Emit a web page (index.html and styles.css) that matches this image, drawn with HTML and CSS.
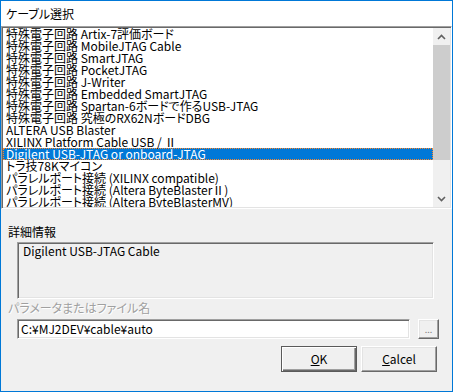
FILE: index.html
```html
<!DOCTYPE html>
<html lang="ja">
<head>
  <meta charset="UTF-8" />
  <title>ケーブル選択</title>
  <link rel="stylesheet" href="styles.css">
</head>
<body>
  <div class="window">
    <div class="titlebar">ケーブル選択</div>

    <div class="listbox">
      <ul class="items">
        <li>特殊電子回路 Artix-7評価ボード</li>
        <li>特殊電子回路 MobileJTAG Cable</li>
        <li>特殊電子回路 SmartJTAG</li>
        <li>特殊電子回路 PocketJTAG</li>
        <li>特殊電子回路 J-Writer</li>
        <li>特殊電子回路 Embedded SmartJTAG</li>
        <li>特殊電子回路 Spartan-6ボードで作るUSB-JTAG</li>
        <li>特殊電子回路 究極のRX62NボードDBG</li>
        <li>ALTERA USB Blaster</li>
        <li>XILINX Platform Cable USB / Ⅱ</li>
        <li class="selected">Digilent USB-JTAG or onboard-JTAG</li>
        <li>トラ技78Kマイコン</li>
        <li>パラレルポート接続 (XILINX compatible)</li>
        <li>パラレルポート接続 (Altera ByteBlasterⅡ)</li>
        <li>パラレルポート接続 (Altera ByteBlasterMV)</li>
      </ul>
      <div class="scrollbar">
        <div class="arrow">
          <svg width="9" height="6" viewBox="0 0 9 6"><path d="M1 5 L4.5 1.5 L8 5" fill="none" stroke="#606060" stroke-width="1.6"/></svg>
        </div>
        <div class="track">
          <div class="thumb"></div>
        </div>
        <div class="arrow">
          <svg width="9" height="6" viewBox="0 0 9 6"><path d="M1 1 L4.5 4.5 L8 1" fill="none" stroke="#606060" stroke-width="1.6"/></svg>
        </div>
      </div>
    </div>

    <div class="label detail-label">詳細情報</div>
    <div class="detail-box">Digilent USB-JTAG Cable</div>

    <div class="label disabled">パラメータまたはファイル名</div>
    <div class="field-row">
      <div class="text-input">C:¥MJ2DEV¥cable¥auto</div>
      <div class="browse-btn">...</div>
    </div>

    <div class="buttons">
      <div class="btn default"><u>O</u>K</div>
      <div class="btn"><u>C</u>alcel</div>
    </div>
  </div>
</body>
</html>
```

FILE: styles.css
```css
body {
  margin: 0;
  font-family: "Noto Sans CJK JP", "Noto Sans", sans-serif;
  font-size: 12px;
  font-feature-settings: "palt";
  color: #000;
}

.window {
  width: 453px;
  height: 392px;
  box-sizing: border-box;
  border: 1px solid #0078d7;
  background-color: #f0f0f0;
  overflow: hidden;
}

.titlebar {
  height: 25px;
  line-height: 25px;
  padding-left: 5px;
  background-color: #fff;
}

.listbox {
  display: flex;
  height: 183px;
  box-sizing: border-box;
  border: 1px solid;
  border-color: #a0a0a0 #fff #fff #a0a0a0;
  box-shadow: inset 1px 1px #696969, inset -1px -1px #e3e3e3;
  background-color: #fff;
  padding: 1px;
}

.items {
  flex: 1;
  list-style: none;
  margin: 0;
  padding: 0;
  overflow: hidden;
}

.items li {
  height: 12px;
  line-height: 12px;
  padding-left: 3px;
  white-space: nowrap;
  box-sizing: border-box;
}

.items li.selected {
  background-color: #0078d7;
  color: #fff;
  outline: 1px dotted #ff8728;
  outline-offset: -1px;
}

.scrollbar {
  width: 17px;
  display: flex;
  flex-direction: column;
  background-color: #f0f0f0;
}

.arrow {
  height: 17px;
  display: flex;
  align-items: center;
  justify-content: center;
}

.track {
  flex: 1;
}

.thumb {
  height: 115px;
  background-color: #cdcdcd;
}

.label {
  padding-left: 7px;
  height: 14px;
  line-height: 14px;
}

.detail-label {
  margin-top: 16px;
  margin-bottom: 3px;
}

.detail-box {
  margin-left: 16px;
  width: 417px;
  height: 57px;
  box-sizing: border-box;
  border: 1px solid;
  border-color: #a0a0a0 #fff #fff #a0a0a0;
  box-shadow: inset 1px 1px #696969, inset -1px -1px #e3e3e3;
  padding: 1px 5px;
  line-height: 14px;
}

.disabled {
  margin-top: 2px;
  color: #a0a0a0;
  text-shadow: 1px 1px #fff;
}

.field-row {
  display: flex;
  gap: 8px;
  margin-top: 4px;
  padding-left: 16px;
}

.text-input {
  width: 393px;
  height: 20px;
  box-sizing: border-box;
  border: 1px solid;
  border-color: #a0a0a0 #fff #fff #a0a0a0;
  box-shadow: inset 1px 1px #696969, inset -1px -1px #e3e3e3;
  background-color: #fff;
  padding-left: 3px;
  line-height: 18px;
}

.browse-btn {
  width: 21px;
  height: 20px;
  box-sizing: border-box;
  border: 1px solid;
  border-color: #fff #696969 #696969 #fff;
  box-shadow: inset -1px -1px #a0a0a0, inset 1px 1px #e3e3e3;
  font-size: 9px;
  line-height: 20px;
  text-align: center;
  color: #808080;
}

.buttons {
  display: flex;
  justify-content: flex-end;
  gap: 4px;
  margin-top: 7px;
  padding-right: 15px;
}

.btn {
  width: 76px;
  height: 26px;
  box-sizing: border-box;
  border: 1px solid;
  border-color: #fff #696969 #696969 #fff;
  box-shadow: inset -1px -1px #a0a0a0, inset 1px 1px #e3e3e3;
  text-align: center;
  line-height: 24px;
}

.btn.default {
  border-color: #5a5a5a;
  box-shadow: inset 1px 1px #fff, inset -1px -1px #696969, inset -2px -2px #a0a0a0;
}
```
